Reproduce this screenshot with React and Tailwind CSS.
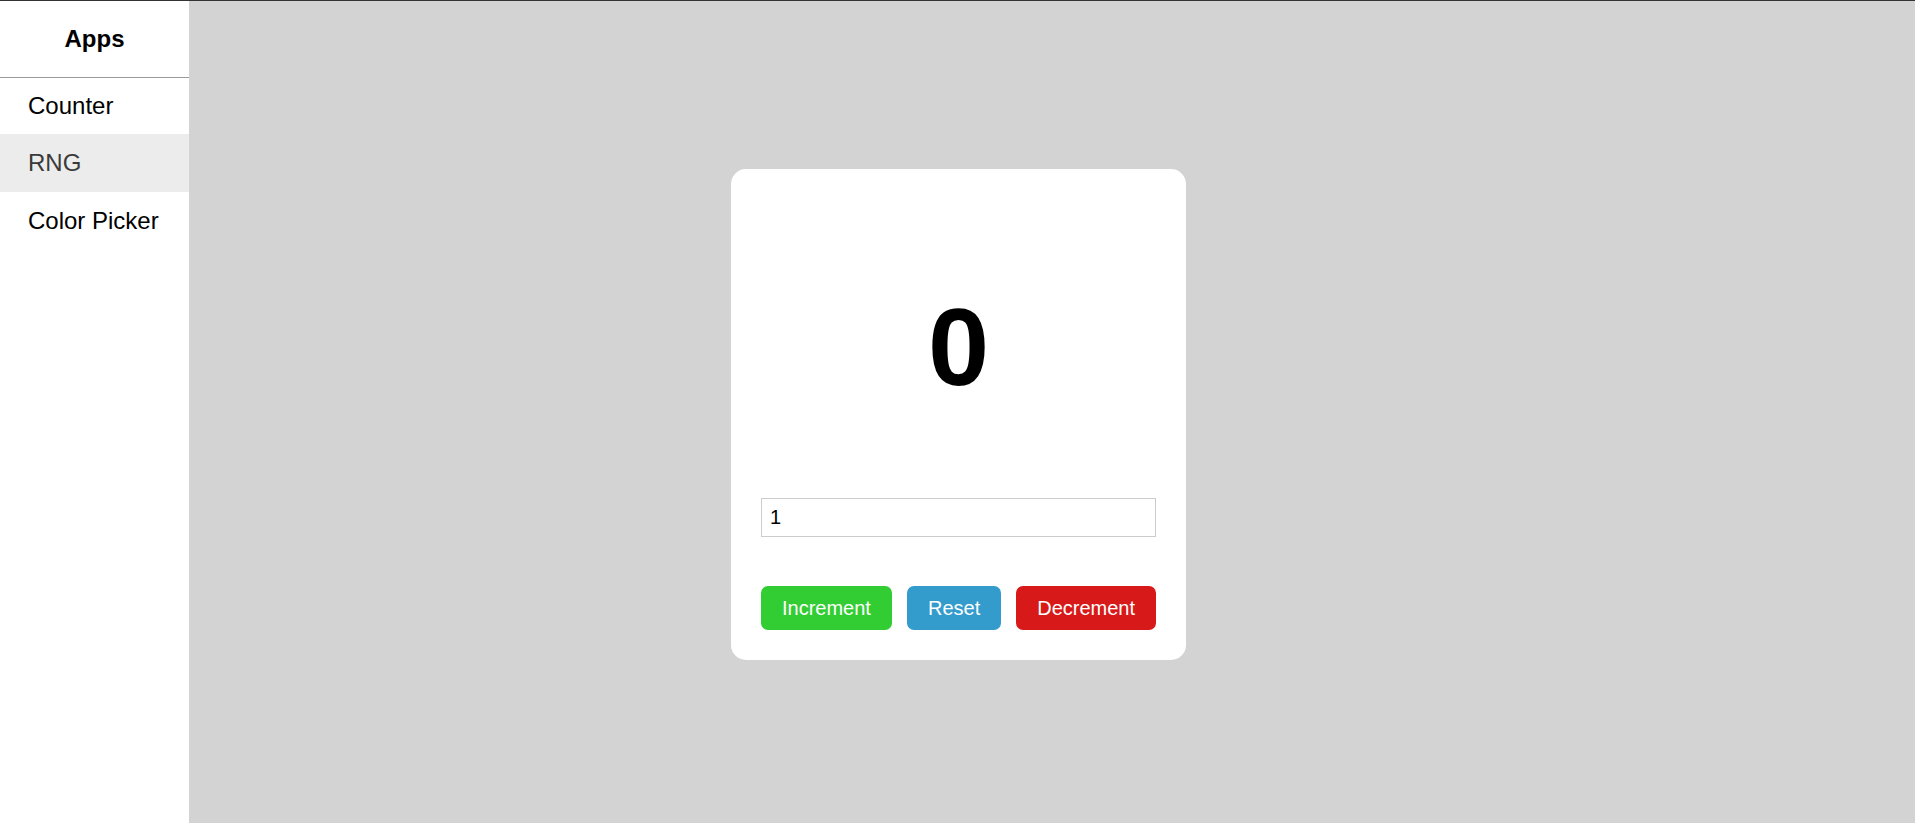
import React from "react";

export default function App() {
  const font = { fontFamily: '"Liberation Sans", Arial, sans-serif' };
  return (
    <div
      className="flex h-[823px] w-full border-t border-[#333333] overflow-hidden"
      style={font}
    >
      <aside className="w-[189px] shrink-0 bg-white flex flex-col">
        <div className="h-[77px] flex items-center justify-center border-b border-[#9a9a9a] text-[24px] font-bold text-black">
          Apps
        </div>
        <nav className="flex flex-col">
          <div className="h-[56px] flex items-center pl-[28px] text-[24px] text-black">
            Counter
          </div>
          <div className="h-[58px] flex items-center pl-[28px] text-[24px] text-[#3a3a3a] bg-[#ececec]">
            RNG
          </div>
          <div className="h-[58px] flex items-center pl-[28px] text-[24px] text-black">
            Color Picker
          </div>
        </nav>
      </aside>
      <main className="flex-1 bg-[#d3d3d3] flex items-center justify-center pr-[187px] pt-[5px]">
        <div className="w-[455px] bg-white rounded-[15px] p-[30px] flex flex-col">
          <div className="h-[299px] flex items-center justify-center pb-[4px]">
            <span className="text-[110px] font-bold leading-none text-black">0</span>
          </div>
          <input
            type="text"
            defaultValue="1"
            className="h-[39px] w-full border border-[#cccccc] px-[8px] text-[20px] text-black outline-none"
            style={font}
          />
          <div className="mt-[49px] flex justify-between">
            <button className="h-[44px] px-[21px] rounded-[7px] bg-[#32cd32] text-white text-[20px]">
              Increment
            </button>
            <button className="h-[44px] px-[21px] rounded-[7px] bg-[#339ccd] text-white text-[20px]">
              Reset
            </button>
            <button className="h-[44px] px-[21px] rounded-[7px] bg-[#d81919] text-white text-[20px]">
              Decrement
            </button>
          </div>
        </div>
      </main>
    </div>
  );
}
